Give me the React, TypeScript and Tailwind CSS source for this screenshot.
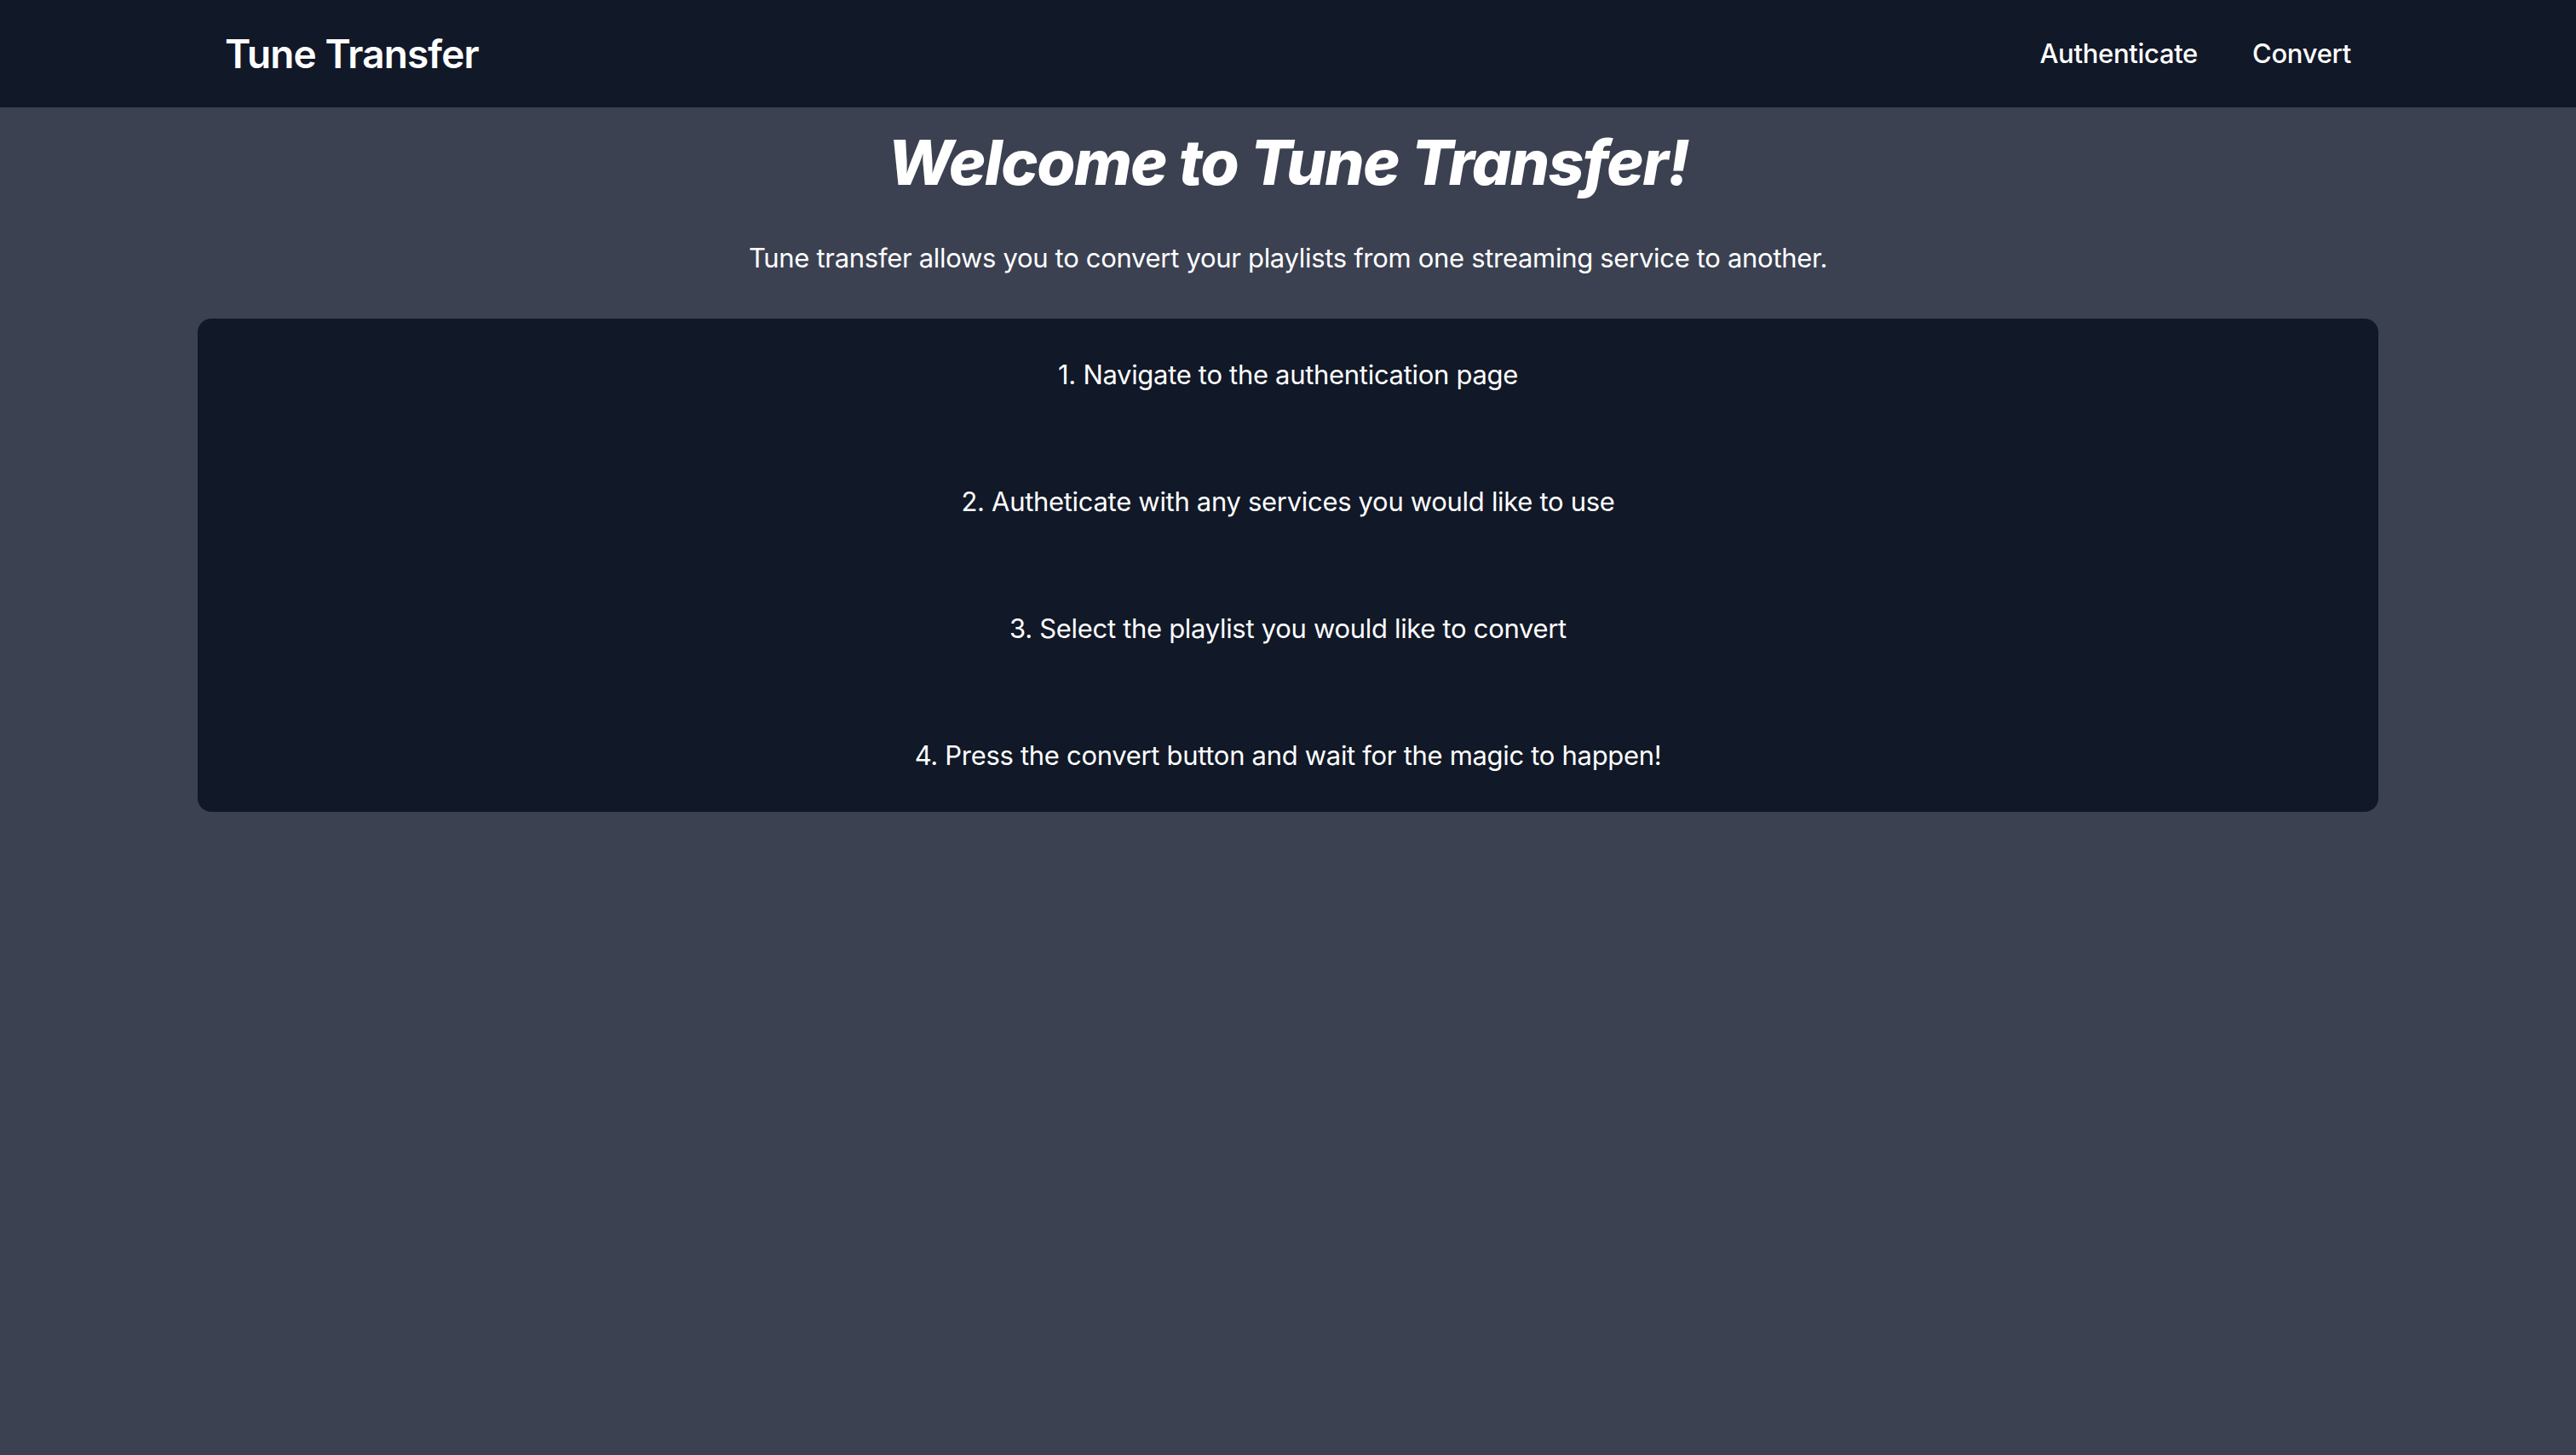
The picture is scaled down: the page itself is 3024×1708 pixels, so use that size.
import React from 'react';

const steps = [
  '1. Navigate to the authentication page',
  '2. Autheticate with any services you would like to use',
  '3. Select the playlist you would like to convert',
  '4. Press the convert button and wait for the magic to happen!',
];

const Navbar: React.FC = () => {
  return (
    <nav className="bg-[#111827] h-[126px]">
      <div className="max-w-[2560px] mx-auto px-8 h-full flex items-center justify-between">
        <a href="#" className="text-[46px] font-semibold text-white tracking-[-0.02em]">
          Tune Transfer
        </a>
        <div className="flex items-center gap-16">
          <a href="#" className="text-[31px] font-medium text-white tracking-[-0.01em]">Authenticate</a>
          <a href="#" className="text-[31px] font-medium text-white tracking-[-0.01em]">Convert</a>
        </div>
      </div>
    </nav>
  );
};

export default function App() {
  return (
    <div className="min-h-screen bg-[#3b4151] text-white font-['Inter',sans-serif]">
      <Navbar />
      <main className="max-w-[2560px] mx-auto flex flex-col items-center">
        <h1 className="text-[73px] leading-none font-extrabold italic tracking-[-0.02em] mt-[28px]">
          Welcome to Tune Transfer!
        </h1>
        <p className="text-[31px] leading-[48px] tracking-[-0.01em] mt-[52px]">
          Tune transfer allows you to convert your playlists from one streaming service to another.
        </p>
        <div className="w-full bg-[#111827] rounded-2xl mt-[47px] py-[42px] flex flex-col gap-[101px]">
          {steps.map((step) => (
            <p key={step} className="text-[31px] leading-[48px] tracking-[-0.01em] text-center">
              {step}
            </p>
          ))}
        </div>
      </main>
    </div>
  );
}
